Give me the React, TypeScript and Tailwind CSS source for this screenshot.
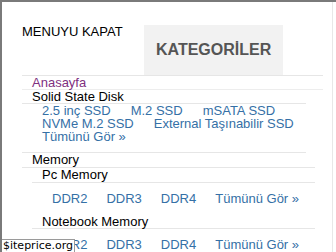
const ssdLinks = [
  "2.5 inç SSD",
  "M.2 SSD",
  "mSATA SSD",
  "NVMe M.2 SSD",
  "External Taşınabilir SSD",
  "Tümünü Gör »",
];

const ramLinks = ["DDR2", "DDR3", "DDR4", "Tümünü Gör »"];

function RamRow() {
  return (
    <div className="flex gap-x-[19px] pl-[20px] pt-[9px] pb-[10px] leading-[13px]">
      {ramLinks.map((l) => (
        <a key={l} href="#" className="text-[#3570a6]">
          {l}
        </a>
      ))}
    </div>
  );
}

export default function App() {
  return (
    <div
      className="relative flex h-[252px] w-[336px] overflow-hidden border-t-2 border-l-2 border-[#7a7a7a] bg-white text-[13px] text-black"
      style={{ fontFamily: '"Liberation Sans", Arial, sans-serif' }}
    >
      <div className="flex-1">
        <div className="ml-[20px] w-[301px]">
          {/* header */}
          <div className="flex items-start border-b border-[#e6e6e6] pt-[22px]">
            <span className="w-[122px] leading-[15px]">MENUYU KAPAT</span>
            <div className="mt-[1px] flex h-[50px] w-[139px] items-center bg-[#f2f2f2] pl-[12px] text-[16px] font-bold text-[#555]">
              KATEGORİLER
            </div>
          </div>

          <ul>
            <li className="border-b border-[#ededed] pl-[10px] leading-[13px]">
              <a href="#" className="text-[#80307f]">
                Anasayfa
              </a>
            </li>
            <li className="mr-[17px] border-b border-[#e6e6e6]">
              <div className="border-b border-[#e6e6e6] pl-[10px] leading-[13px]">Solid State Disk</div>
              <div className="flex flex-wrap gap-x-[20px] pb-[9px] pl-[20px] pr-[4px] leading-[13px]">
                {ssdLinks.map((l) => (
                  <a key={l} href="#" className="text-[#3570a6]">
                    {l}
                  </a>
                ))}
              </div>
            </li>
            <li className="mr-[8px]">
              <div className="border-b border-[#e6e6e6] pl-[10px] leading-[14px]">Memory</div>
              <ul className="ml-[10px]">
                <li>
                  <div className="border-b border-[#e6e6e6] pl-[10px] leading-[14px]">Pc Memory</div>
                  <RamRow />
                </li>
                <li>
                  <div className="border-b border-[#e6e6e6] pl-[10px] leading-[13px]">Notebook Memory</div>
                  <RamRow />
                </li>
              </ul>
            </li>
          </ul>
        </div>
      </div>
      <div className="w-[4px] shrink-0 border-l border-[#e8e8e8]" />

      <div
        className="absolute bottom-0 left-0 border-t border-r border-[#9a9a9a] bg-white px-[1px] text-[11px] leading-[12px] text-black"
        style={{ fontFamily: '"DejaVu Sans", sans-serif' }}
      >
        $iteprice.org
      </div>
    </div>
  );
}
